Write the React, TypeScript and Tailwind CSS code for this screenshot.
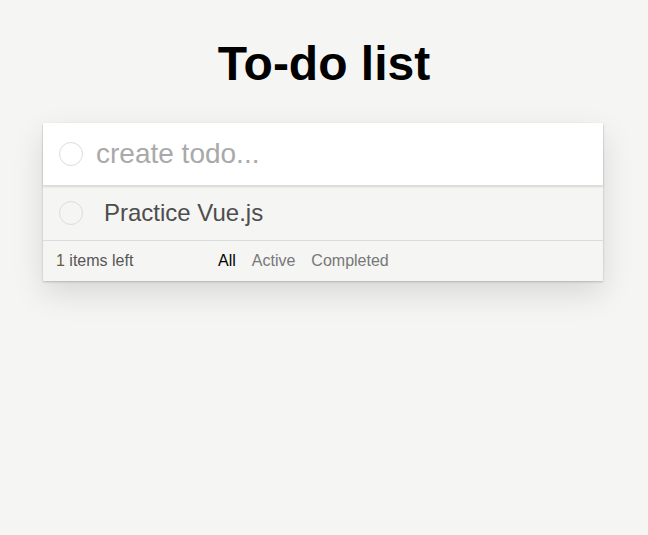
const filters = ['All', 'Active', 'Completed'];

function Circle() {
  return <span className="block h-6 w-6 shrink-0 rounded-full border border-[#dcdcdc]" />;
}

export default function App() {
  return (
    <div className="min-h-[535px] bg-[#f5f5f4] pt-[36px] font-['Liberation_Sans',Arial,sans-serif]">
      <h1 className="text-center text-[48px] font-bold leading-[55px] text-black">To-do list</h1>
      <div className="ml-[43px] mt-8 w-[560px] bg-[#f5f5f4] shadow-[0_1px_2px_rgba(0,0,0,0.2),0_12px_30px_rgba(0,0,0,0.12)]">
        <div className="relative z-10 flex h-[62px] items-center gap-[13px] bg-white pl-4 shadow-[0_2px_2px_rgba(0,0,0,0.12)]">
          <Circle />
          <input
            className="w-full bg-transparent text-[28px] text-[#4d4d4d] outline-none placeholder:text-[#a9a9a9]"
            placeholder="create todo..."
          />
        </div>
        <div className="flex h-[56px] items-center gap-[21px] border-b border-[#dcdcdc] pl-4">
          <Circle />
          <span className="text-[24px] text-[#4d4d4d]">Practice Vue.js</span>
        </div>
        <div className="flex h-10 items-center pl-[13px] text-base text-[#555]">
          <span className="w-[162px]">
            <span className="text-[#6b5a40]">1</span> items left
          </span>
          <div className="flex gap-4">
            {filters.map((f, i) => (
              <span key={f} className={i === 0 ? 'text-black' : 'text-[#777]'}>
                {f}
              </span>
            ))}
          </div>
        </div>
      </div>
    </div>
  );
}
